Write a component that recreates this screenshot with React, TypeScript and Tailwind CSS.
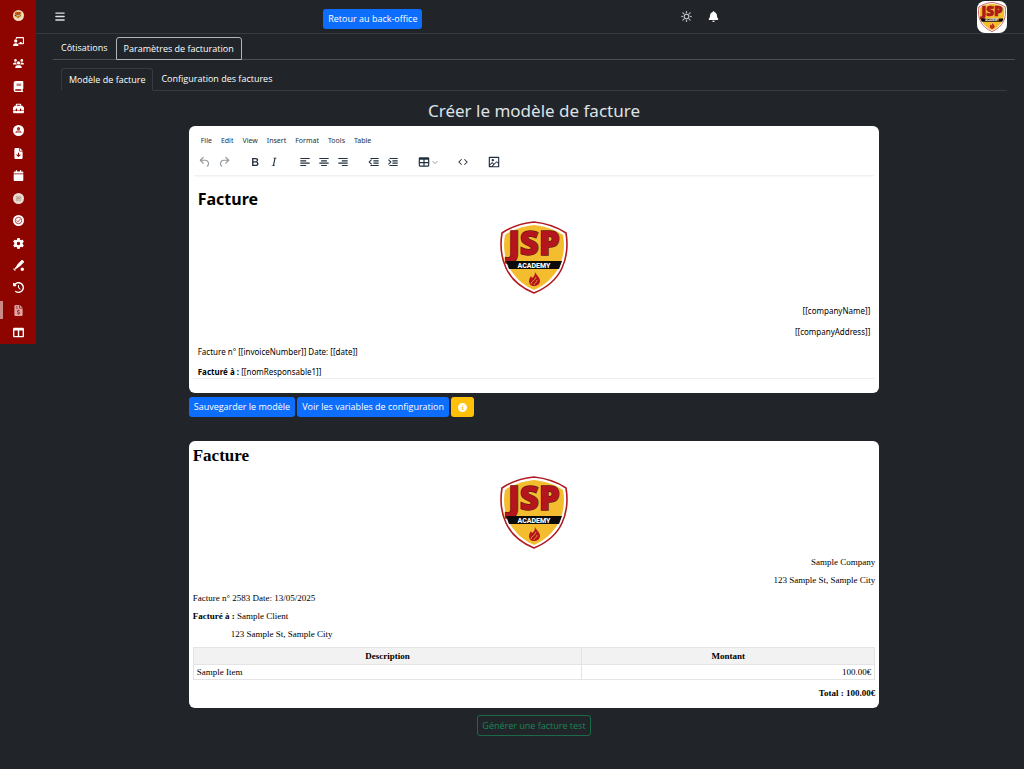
import * as React from "react";
import clsx from "clsx";
import {
  FaBars,
  FaBaseballBatBall,
  FaBell,
  FaBook,
  FaCalendar,
  FaChalkboardUser,
  FaCircleInfo,
  FaClockRotateLeft,
  FaFileArrowDown,
  FaFileInvoiceDollar,
  FaGear,
  FaTableColumns,
  FaToolbox,
  FaUsers,
} from "react-icons/fa6";
import { BsSun } from "react-icons/bs";

const PersonBadgeIcon = ({ className }: { className?: string }) => (
  <svg viewBox="0 0 24 24" className={className}>
    <circle cx="12" cy="12" r="12" fill="#fff" />
    <circle cx="12" cy="8" r="3.500" fill="#a33" />
    <path d="M5 17c1-4 3-5 7-5s6 1 7 5Z" fill="#a33" />
    <path d="M8 15h8" stroke="#fff" strokeWidth="1.500" />
  </svg>
);

const CoinIcon = ({ className }: { className?: string }) => (
  <svg viewBox="0 0 24 24" className={className}>
    <circle cx="12" cy="12" r="12" fill="#eadfd6" />
    <rect x="7" y="7" width="10" height="10" fill="none" stroke="#b9a392" strokeWidth="1.500" />
    <path d="M8 15l3-6 2 5 3-5" fill="none" stroke="#a98f7c" strokeWidth="2" />
  </svg>
);

const TargetCheckIcon = ({ className }: { className?: string }) => (
  <svg viewBox="0 0 24 24" className={className} fill="none">
    <circle cx="12" cy="12" r="12" fill="#fff" />
    <circle cx="12" cy="12" r="7" stroke="#b33" strokeWidth="2" />
    <path d="M8 12l3 3 5-6" stroke="#b33" strokeWidth="2" />
  </svg>
);

const sidebarItems = [
  { label: "Cours", icon: FaChalkboardUser },
  { label: "Groupes", icon: FaUsers },
  { label: "Documentation", icon: FaBook },
  { label: "Outils", icon: FaToolbox },
  { label: "Profil", icon: PersonBadgeIcon },
  { label: "Téléchargements", icon: FaFileArrowDown },
  { label: "Calendrier", icon: FaCalendar },
  { label: "Partenaires", icon: CoinIcon },
  { label: "Validation", icon: TargetCheckIcon },
  { label: "Réglages", icon: FaGear },
  { label: "Sport", icon: FaBaseballBatBall },
  { label: "Historique", icon: FaClockRotateLeft },
  { label: "Facturation", icon: FaFileInvoiceDollar, active: true },
  { label: "Tableau", icon: FaTableColumns },
];

const menus = ["File", "Edit", "View", "Insert", "Format", "Tools", "Table"];

const toolGroups = [
  [
    {
      label: "Undo",
      muted: true,
      d: "M6.4 8H12c3.7 0 6.2 2 6.8 5.1.6 2.7-.4 5.6-2.3 6.8a1 1 0 0 1-1-1.8c1.1-.6 1.8-2.7 1.4-4.6-.5-2.1-2.1-3.5-4.9-3.5H6.4l3.3 3.3a1 1 0 1 1-1.4 1.4l-5-5a1 1 0 0 1 0-1.4l5-5a1 1 0 0 1 1.4 1.4L6.4 8Z",
    },
    {
      label: "Redo",
      muted: true,
      d: "M17.6 10H12c-2.8 0-4.4 1.4-4.9 3.5-.4 2 .3 4 1.4 4.6a1 1 0 1 1-1 1.8c-2-1.2-2.9-4.1-2.3-6.8.6-3 3-5.1 6.8-5.1h5.6l-3.3-3.3a1 1 0 1 1 1.4-1.4l5 5a1 1 0 0 1 0 1.4l-5 5a1 1 0 0 1-1.4-1.4l3.3-3.3Z",
    },
  ],
  [
    {
      label: "Bold",
      d: "M7.8 19c-.3 0-.5 0-.6-.2l-.2-.5V5.7c0-.2 0-.4.2-.5l.6-.2h5c1.5 0 2.7.3 3.5 1 .7.6 1.1 1.4 1.1 2.5a3 3 0 0 1-.6 1.9c-.4.6-1 1-1.6 1.2.4.1.9.3 1.3.6s.8.7 1 1.2c.4.4.5 1 .5 1.6 0 1.3-.4 2.3-1.3 3-.8.7-2.1 1-3.8 1H7.8Zm5-8.3c.6 0 1.2-.1 1.6-.5.4-.3.6-.7.6-1.3 0-1.1-.8-1.7-2.3-1.7H9.3v3.5h3.4Zm.5 6c.7 0 1.3-.1 1.7-.4.4-.4.6-.9.6-1.5s-.2-1-.7-1.4c-.4-.3-1-.4-2-.4H9.4v3.8h4Z",
    },
    {
      label: "Italic",
      d: "m16.7 4.7-.1.9h-.3c-.6 0-1 0-1.4.3-.3.3-.4.6-.5 1.1l-2.1 9.8v.6c0 .5.4.8 1.4.8h.2l-.2.8H8l.2-.8h.2c1.1 0 1.8-.5 2-1.5l2-9.8.1-.5c0-.6-.4-.8-1.4-.8h-.3l.2-.9h5.8Z",
    },
  ],
  [
    { label: "Align left", d: "M4 5h16v2H4zM4 9h10v2H4zM4 13h16v2H4zM4 17h10v2H4z" },
    { label: "Align center", d: "M4 5h16v2H4zM7 9h10v2H7zM4 13h16v2H4zM7 17h10v2H7z" },
    { label: "Align right", d: "M4 5h16v2H4zM10 9h10v2H10zM4 13h16v2H4zM10 17h10v2H10z" },
  ],
  [
    { label: "Decrease indent", d: "M6 5h14v2H6zM11 9h9v2h-9zM11 13h9v2h-9zM6 17h14v2H6zM8.500 15.500 5 12l3.500-3.500-1.300-1.200L2.500 12l4.700 4.700z" },
    { label: "Increase indent", d: "M6 5h14v2H6zM11 9h9v2h-9zM11 13h9v2h-9zM6 17h14v2H6zM3.500 15.500 7 12 3.500 8.500l1.300-1.200L9.500 12l-4.700 4.700z" },
  ],
  [
    {
      label: "Table",
      dropdown: true,
      d: "M19 4a2 2 0 0 1 2 2v12a2 2 0 0 1-2 2H5a2 2 0 0 1-2-2V6c0-1.1.9-2 2-2h14ZM5 14v4h6v-4H5Zm14 0h-6v4h6v-4Zm0-6h-6v4h6V8ZM5 12h6V8H5v4Z",
    },
  ],
  [
    {
      label: "Source code",
      d: "M9.8 15.7c.3.3.3.8 0 1-.3.4-.9.4-1.2 0l-4.4-4.1a.8.8 0 0 1 0-1.2l4.4-4.2c.3-.3.9-.3 1.2 0 .3.3.3.8 0 1.1L6 12l3.8 3.7ZM14.2 15.7c-.3.3-.3.8 0 1 .4.4.9.4 1.2 0l4.4-4.1c.3-.3.3-.9 0-1.2l-4.4-4.2a.8.8 0 0 0-1.2 0c-.3.3-.3.8 0 1.1L18 12l-3.8 3.7Z",
    },
  ],
  [
    {
      label: "Image",
      d: "m5 15.7 3.3-3.2c.3-.3.7-.3 1 0L12 15l4.1-4c.3-.4.8-.4 1 0l2 1.9V5H5v10.7ZM5 18V19h3l2.8-2.9-2-2L5 17.9Zm14-3-2.5-2.4-6.4 6.5H19v-4ZM4 3h16c.6 0 1 .4 1 1v16c0 .6-.4 1-1 1H4a1 1 0 0 1-1-1V4c0-.6.4-1 1-1Zm6 8a2 2 0 1 0 0-4 2 2 0 0 0 0 4Z",
    },
  ],
];

function Logo({ className }: { className?: string }) {
  return (
    <svg viewBox="0 0 68 73" className={className} role="img" aria-label="JSP Academy">
      <path
        d="M34 1C24 2 11 6 2 12 0 24 1 36 6 47c5 11 16 20 28 25 12-5 23-14 28-25 5-11 6-23 4-35C57 6 44 2 34 1Z"
        fill="#fff"
        stroke="#b11a20"
        strokeWidth="1.6"
      />
      <path d="M34 4C25 5 13 8 5 14 3 24 4 36 9 46c5 10 14 18 25 23 11-5 20-13 25-23 5-10 6-22 4-32C55 8 43 5 34 4Z" fill="#f4bd2f" />
      <text
        x="34"
        y="34"
        textAnchor="middle"
        fontFamily="Open Sans, sans-serif"
        fontWeight="800"
        fontSize="33"
        fill="#b5161d"
        stroke="#6b1512"
        strokeWidth="1.5"
        paintOrder="stroke"
      >
        JSP
      </text>
      <path d="M6 40h56l-3 8H9Z" fill="#0b0b0b" />
      <text x="34" y="47" textAnchor="middle" fontFamily="Roboto, sans-serif" fontWeight="800" fontSize="7" fill="#fff">
        ACADEMY
      </text>
      <path d="M35 51c1 3 5 5 5 9 0 3-3 5-6 5s-5-2-5-5c0-2 1-3 2-5l1 2c2-1 3-3 3-6Z" fill="#b5161d" />
      <path d="M31 63c0-3 4-3 5-7M34 64c0-2 3-2 3-5" fill="none" stroke="#f4bd2f" strokeWidth="0.7" />
    </svg>
  );
}

function Sidebar() {
  return (
    <aside className="flex h-[344px] w-9 shrink-0 flex-col bg-[#8e0500] text-white">
      <a href="#accueil" aria-label="Accueil" className="flex h-[30px] shrink-0 items-center justify-center">
        <span className="flex h-[11px] w-[11px] items-center justify-center rounded-full bg-[#f1dcc0]">
          <Logo className="h-2 w-2" />
        </span>
      </a>
      <nav className="flex flex-1 flex-col">
        {sidebarItems.map((item) => {
          const Icon = item.icon;
          return (
            <a
              key={item.label}
              href="#"
              aria-label={item.label}
              className="flex flex-1 items-center"
            >
              <span className={clsx("h-[18px] w-[3px]", item.active && "bg-[#c98a88]")} />
              <Icon className={clsx("ml-[10px] h-[11px] w-[11px]", item.active && "text-[#e0a5a3]")} />
            </a>
          );
        })}
      </nav>
    </aside>
  );
}

function Header() {
  return (
    <header className="flex h-[34px] items-center justify-between border-b border-[#373b3f] pr-[17px] pl-[19px]">
      <button aria-label="Menu">
        <FaBars className="h-[11px] w-[10px] text-[#dee2e6]" />
      </button>
      <button className="mt-1 h-5 rounded-[3px] bg-[#0d6efd] px-[5px] text-white">Retour au back-office</button>
      <div className="flex items-center gap-4">
        <button aria-label="Thème">
          <BsSun className="h-[11px] w-[11px] stroke-current stroke-[0.4]" />
        </button>
        <button aria-label="Notifications">
          <FaBell className="h-[11px] w-[11px] text-white" />
        </button>
      </div>
      <button aria-label="Compte" className="flex h-8 w-[30px] items-center justify-center rounded-lg bg-white">
        <Logo className="h-[30px] w-7" />
      </button>
    </header>
  );
}

function Toolbar() {
  return (
    <div className="mx-1 px-[5px] pb-[6px] font-['Noto_Sans',sans-serif] shadow-[0_2px_2px_-1px_rgba(34,47,62,0.1)]">
      <div className="flex gap-[9px] px-[3px] pt-2 text-[7px] leading-3 text-[#222f3e]">
        {menus.map((menu) => (
          <button key={menu}>{menu}</button>
        ))}
      </div>
      <div className="mt-2 flex gap-[17px]">
        {toolGroups.map((group, i) => (
          <div key={i} className="flex gap-[5px]">
            {group.map((tool) => (
              <button
                key={tool.label}
                aria-label={tool.label}
                className={clsx("flex items-center", tool.muted ? "text-[#222f3e]/50" : "text-[#222f3e]")}
              >
                <svg viewBox="0 0 24 24" className="h-[14px] w-[14px]" fill="currentColor">
                  <path d={tool.d} fillRule="evenodd" />
                </svg>
                {tool.dropdown && (
                  <svg viewBox="0 0 10 10" className="h-2 w-2" fill="none" stroke="currentColor" opacity="0.6">
                    <path d="M2 4l3 3 3-3" />
                  </svg>
                )}
              </button>
            ))}
          </div>
        ))}
      </div>
    </div>
  );
}

function Editor() {
  return (
    <section className="rounded-md bg-white pt-px pb-[14px] text-black">
      <Toolbar />
      <div className="mx-1 border-b border-[#eee] px-[5px] pt-3 font-['Noto_Sans',sans-serif] text-[8px] leading-[13px]">
        <h2 className="text-[16px] leading-6 font-bold">Facture</h2>
        <Logo className="mx-auto mt-[10px] h-[73px] w-[68px]" />
        <p className="mt-[10px] text-right">[[companyName]]</p>
        <p className="mt-2 text-right">[[companyAddress]]</p>
        <p className="mt-[7px]">Facture n° [[invoiceNumber]] Date: [[date]]</p>
        <p className="mt-[7px]">
          <strong>Facturé à :</strong> [[nomResponsable1]]
        </p>
      </div>
    </section>
  );
}

function Preview() {
  return (
    <section className="rounded-md bg-white px-1 pt-1 pb-[10px] font-['Liberation_Serif',serif] text-[9px] leading-[10px] text-black">
      <h2 className="text-[17px] leading-[22px] font-bold">Facture</h2>
      <Logo className="mx-auto mt-[9px] h-[73px] w-[68px]" />
      <p className="mt-2 text-right">Sample Company</p>
      <p className="mt-2 text-right">123 Sample St, Sample City</p>
      <p className="mt-2">Facture n° 2583 Date: 13/05/2025</p>
      <p className="mt-2">
        <strong>Facturé à :</strong> Sample Client
      </p>
      <p className="mt-2 ml-[38px]">123 Sample St, Sample City</p>
      <table className="mt-2 w-full border-collapse">
        <thead>
          <tr className="bg-[#f2f2f2]">
            <th className="border border-[#e4e4e4] p-[3px]">Description</th>
            <th className="w-[43%] border border-[#e4e4e4] p-[3px]">Montant</th>
          </tr>
        </thead>
        <tbody>
          <tr>
            <td className="border border-[#e4e4e4] px-[3px] py-0.5">Sample Item</td>
            <td className="border border-[#e4e4e4] px-[3px] py-0.5 text-right">100.00€</td>
          </tr>
        </tbody>
      </table>
      <p className="mt-2 text-right font-bold">Total : 100.00€</p>
    </section>
  );
}

export default function App() {
  return (
    <div className="flex min-h-screen items-start bg-[#212529] font-['Open_Sans',sans-serif] text-[9px] leading-[14px] text-[#dee2e6]">
      <Sidebar />
      <div className="min-w-0 flex-1">
        <Header />
        <main className="pr-[9px] pl-[17px]">
          <nav className="flex border-b border-[#495057] pt-[3px] text-white">
            <button className="border border-transparent px-[7px] py-[3px]">Côtisations</button>
            <button className="-mb-px rounded-t-[3px] border border-[#adb5bd] px-[7px] py-[3px]">Paramètres de facturation</button>
          </nav>
          <div className="px-2 pt-2">
            <nav className="flex border-b border-[#373b3f] text-white">
              <button className="-mb-px rounded-t-[3px] border border-[#373b3f] border-b-[#212529] px-[7px] py-[3px]">Modèle de facture</button>
              <button className="border border-transparent px-[7px] py-[3px]">Configuration des factures</button>
            </nav>
            <div className="mx-auto w-[73%] pt-[9px]">
              <h1 className="pb-1 text-center font-['Noto_Sans',sans-serif] text-[17px] leading-[22px]">Créer le modèle de facture</h1>
              <Editor />
              <div className="mt-1 flex gap-0.5 text-white">
                <button className="h-5 rounded-[3px] bg-[#0d6efd] px-[5px]">Sauvegarder le modèle</button>
                <button className="h-5 rounded-[3px] bg-[#0d6efd] px-[5px]">Voir les variables de configuration</button>
                <button aria-label="Informations" className="h-5 rounded-[3px] bg-[#ffc107] px-[7px]">
                  <FaCircleInfo className="h-[9px] w-[9px]" />
                </button>
              </div>
              <div className="mt-6">
                <Preview />
              </div>
              <div className="mt-[7px] text-center">
                <button className="h-[21px] rounded-[3px] border border-[#198754]/70 px-1 leading-none text-[#198754]">
                  Générer une facture test
                </button>
              </div>
            </div>
          </div>
        </main>
      </div>
    </div>
  );
}
